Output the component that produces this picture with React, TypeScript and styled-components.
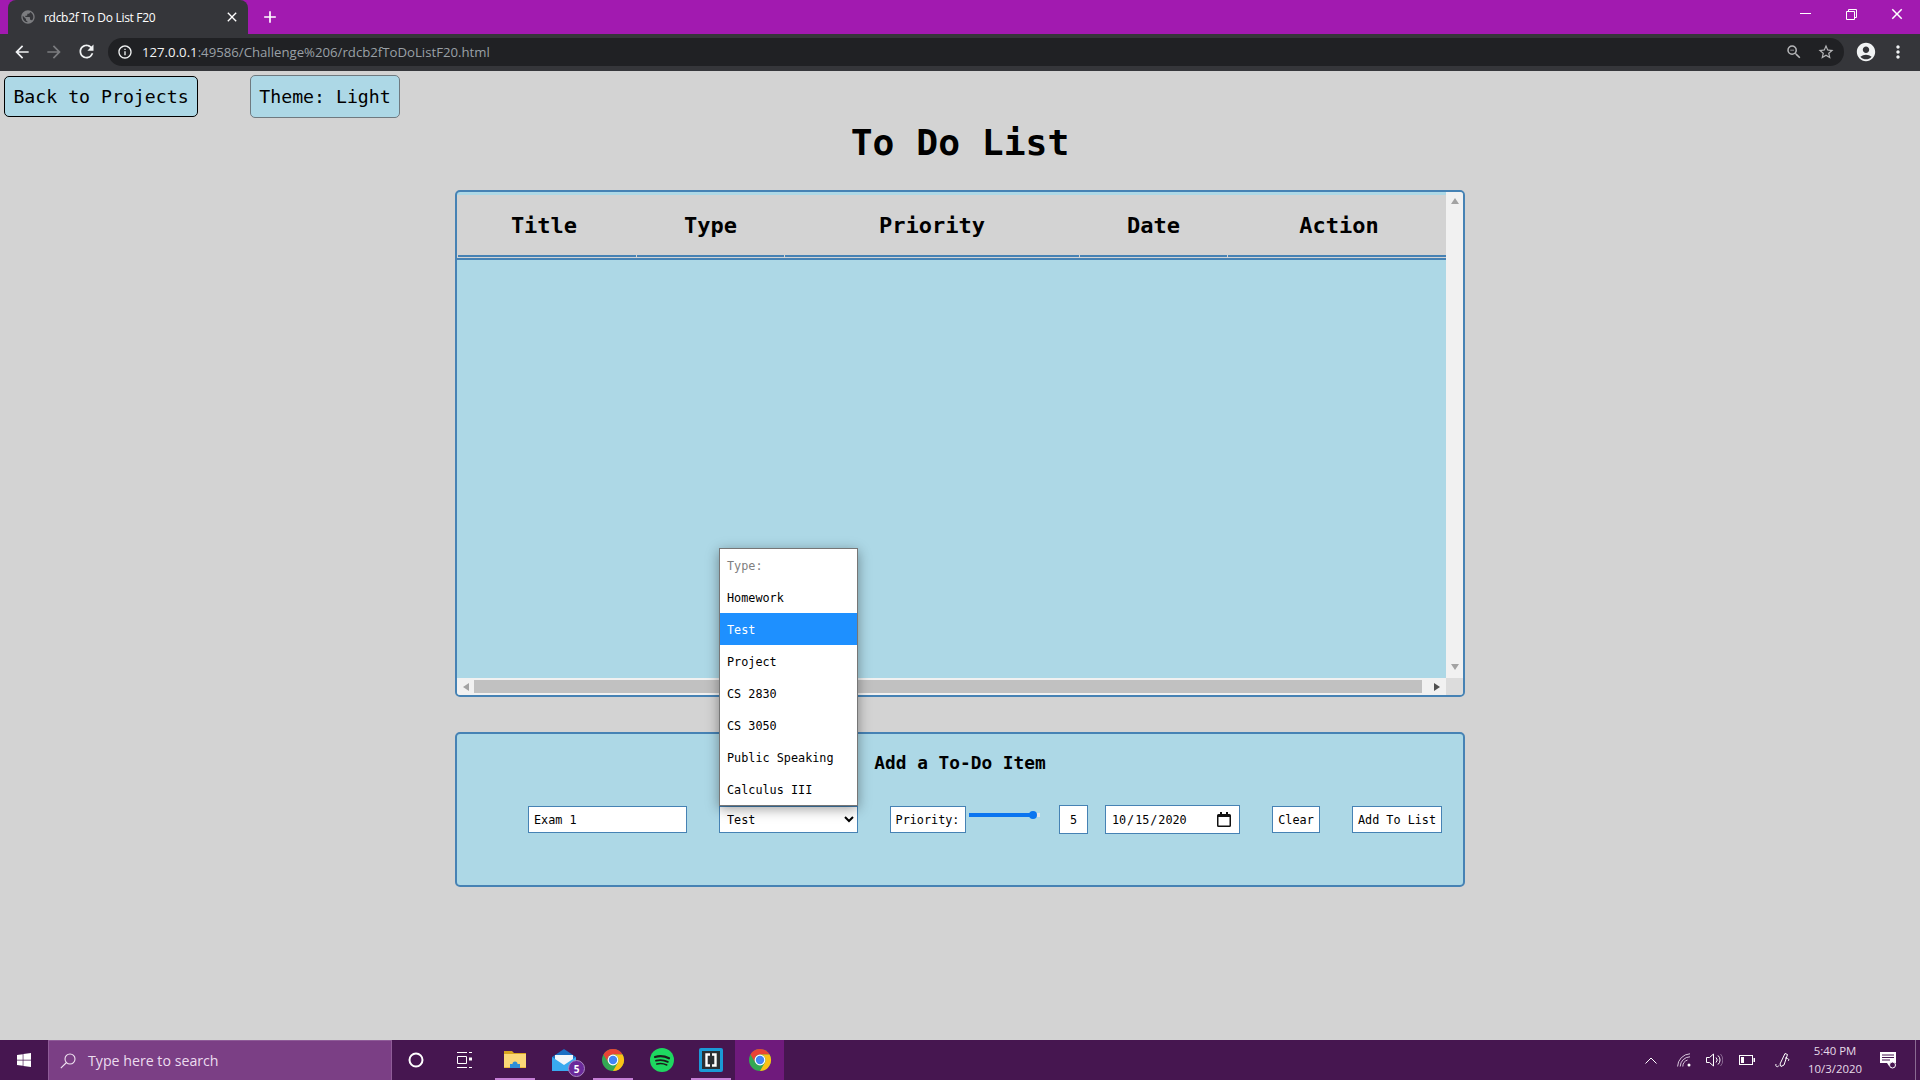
import React from 'react';
import styled, {createGlobalStyle} from 'styled-components';
import {MdArrowBack, MdArrowForward, MdRefresh, MdInfoOutline, MdAccountCircle, MdMoreVert, MdStarBorder, MdOutlineZoomOut, MdPublic, MdClose, MdAdd} from 'react-icons/md';
import {FaWindows} from 'react-icons/fa';

const MONO = '"DejaVu Sans Mono", "Liberation Mono", monospace';
const UI = '"Open Sans", "Noto Sans", sans-serif';

const calendarIcon = encodeURIComponent(
  '<svg xmlns="http://www.w3.org/2000/svg" width="14" height="15"><path d="M3 0h2v2h4V0h2v2h1.500A1.500 1.500 0 0 1 14 3.500v10a1.500 1.500 0 0 1-1.500 1.500h-11A1.500 1.500 0 0 1 0 13.500v-10A1.500 1.500 0 0 1 1.500 2H3z" fill="#111"/><rect x="1.500" y="5" width="11" height="8.500" fill="#fff"/></svg>'
);

const GlobalStyle = createGlobalStyle`
  html, body { margin: 0; padding: 0; height: 100%; overflow: hidden; }
  #root { height: 100%; }
  * { box-sizing: border-box; }
`;

const Screen = styled.div`
  width: 1920px;
  height: 1080px;
  display: flex;
  flex-direction: column;
  background: #d3d3d3;
  font-family: ${MONO};
  color: #000;
`;

/* browser chrome */
const TabStrip = styled.div`
  height: 34px;
  background: #a21ab0;
  display: flex;
  align-items: flex-end;
  padding-left: 8px;
  color: #fff;
  font-family: ${UI};
`;
const Tab = styled.div`
  width: 240px;
  height: 34px;
  background: #35363a;
  border-radius: 8px 8px 0 0;
  display: flex;
  align-items: center;
  padding: 0 8px 0 12px;
  font-size: 12px;
  letter-spacing: -0.3px;
`;
const TabTitle = styled.span`
  flex: 1;
  margin-left: 8px;
`;
const NewTab = styled.div`
  width: 44px;
  height: 34px;
  display: flex;
  align-items: center;
  justify-content: center;
`;
const WindowControls = styled.div`
  margin-left: auto;
  height: 28px;
  align-self: flex-start;
  display: flex;
`;
const WindowButton = styled.div`
  width: 46px;
  display: flex;
  align-items: center;
  justify-content: center;
`;
const Toolbar = styled.div`
  height: 37px;
  background: #35363a;
  display: flex;
  align-items: center;
  padding: 0 0 2px 6px;
`;
const NavButton = styled.div<{$dim?: boolean}>`
  width: 32px;
  height: 32px;
  display: flex;
  align-items: center;
  justify-content: center;
  color: ${p => (p.$dim ? '#7b7c7f' : '#f1f3f4')};
`;
const Omnibox = styled.div`
  width: 1736px;
  height: 28px;
  margin-left: 6px;
  background: #202124;
  border-radius: 14px;
  display: flex;
  align-items: center;
  padding: 0 2px 0 9px;
  color: #f1f3f4;
  font-family: ${UI};
  font-size: 13.2px;
`;
const Url = styled.span`
  margin-left: 9px;
  flex: 1;
`;
const UrlDim = styled.span`
  color: #9aa0a6;
`;
const OmniIcon = styled.div`
  width: 32px;
  display: flex;
  justify-content: center;
  color: #b5b6b8;
`;
const ToolbarEnd = styled.div`
  flex: 1;
  display: flex;
  align-items: center;
  justify-content: flex-end;
  color: #f1f3f4;
  padding-right: 6px;
`;
const ToolbarSlot = styled.div`
  width: 32px;
  display: flex;
  justify-content: center;
`;

/* page */
const Page = styled.main`
  flex: 1;
  min-height: 0;
  display: flex;
  flex-direction: column;
`;
const TopButtons = styled.div`
  height: 48px;
  padding: 3px 0 0 4px;
  display: flex;
  align-items: center;
`;
const NavAction = styled.button<{$outline?: string}>`
  height: ${p => (p.$outline ? '43px' : '41px')};
  width: ${p => (p.$outline ? '150px' : '194px')};
  margin-left: ${p => (p.$outline ? '52px' : '0')};
  padding: 0;
  background: #add8e6;
  border: 1px solid ${p => p.$outline || '#000'};
  border-radius: 5px;
  font-family: ${MONO};
  font-size: 18.2px;
  color: #000;
`;
const Heading = styled.h1`
  margin: 0;
  height: 71px;
  line-height: 48px;
  text-align: center;
  font-size: 36.3px;
  font-weight: 700;
`;
const Panel = styled.section`
  width: 1010px;
  margin: 0 auto;
  border: 2px solid #4682b4;
  border-radius: 5px;
  background: #add8e6;
`;
const ListPanel = styled(Panel)`
  height: 507px;
  display: grid;
  grid-template-columns: 1fr 17px;
  grid-template-rows: 1fr 17px;
  overflow: hidden;
`;
const ListBody = styled.div`
  padding-top: 3px;
`;
const HeaderRow = styled.div`
  display: grid;
  grid-template-columns: 178px 147px 294px 147px 1fr;
  column-gap: 1px;
  padding: 0 0 1px 1px;
  background: #d3d3d3;
  border-bottom: 2px solid #4682b4;
`;
const HeaderCell = styled.div`
  height: 62px;
  border-bottom: 2px solid #4682b4;
  display: flex;
  align-items: center;
  justify-content: center;
  font-size: 22px;
  font-weight: 700;
  &:first-child { padding-right: 6px; }
  &:last-child { padding-left: 4px; }
`;
const VScroll = styled.div`
  background: #f1f1f1;
  display: flex;
  flex-direction: column;
  justify-content: space-between;
  align-items: center;
  padding: 6px 0 8px;
`;
const HScroll = styled.div`
  background: #f1f1f1;
  display: grid;
  grid-template-columns: 17px 1fr 24px;
  align-items: start;
  padding-top: 2px;
`;
const HThumb = styled.div`
  height: 13px;
  background: #c1c1c1;
`;
const ScrollCorner = styled.div`
  background: #dcdcdc;
`;
const ArrowCell = styled.div<{$nudge?: number}>`
  height: 13px;
  display: flex;
  justify-content: center;
  align-items: center;
  padding-left: ${p => p.$nudge || 0}px;
`;
const FormPanel = styled(Panel)`
  height: 155px;
  margin-top: 35px;
`;
const FormTitle = styled.h2`
  margin: 0;
  height: 71px;
  padding-top: 15px;
  line-height: 27px;
  text-align: center;
  font-size: 17.8px;
  font-weight: 700;
`;
const FormRow = styled.div`
  display: flex;
  align-items: center;
  height: 29px;
  padding-left: 71px;
  font-size: 11.8px;
`;
const boxStyle = `
  height: 27px;
  background: #fff;
  border: 1px solid #4682b4;
  border-radius: 0;
  font-family: ${MONO};
  font-size: 11.8px;
  color: #000;
  outline: none;
`;
const TextInput = styled.input`
  ${boxStyle}
  width: 159px;
  padding: 0 5px;
`;
const SelectWrap = styled.div`
  position: relative;
  width: 139px;
  margin-left: 32px;
`;
const TypeSelect = styled.select`
  ${boxStyle}
  width: 100%;
  display: block;
  padding-left: 3px;
`;
const OptionList = styled.ul`
  position: absolute;
  left: 0;
  right: 0;
  bottom: 100%;
  margin: 0;
  padding: 0;
  list-style: none;
  background: #fff;
  border: 1px solid #767676;
  box-shadow: 0 3px 12px rgba(0, 0, 0, 0.38);
  z-index: 5;
`;
const OptionItem = styled.li<{$selected?: boolean; $muted?: boolean}>`
  height: 32px;
  line-height: 34px;
  padding-left: 7px;
  white-space: pre;
  color: ${p => (p.$selected ? '#fff' : p.$muted ? '#808080' : '#000')};
  background: ${p => (p.$selected ? '#1e90ff' : 'transparent')};
`;
const PriorityLabel = styled.label`
  ${boxStyle}
  width: 76px;
  margin-left: 32px;
  padding-right: 1px;
  display: flex;
  align-items: center;
  justify-content: center;
`;
const Slider = styled.input`
  appearance: none;
  width: 71px;
  height: 8px;
  margin: 0 0 10px 3px;
  padding: 0;
  background: linear-gradient(90deg, #0b75f0 0 90%, #e4e4e4 90% 100%);
  background-size: 100% 4px;
  background-position: center;
  background-repeat: no-repeat;
  border-radius: 2px;
  &::-webkit-slider-thumb {
    appearance: none;
    width: 8px;
    height: 8px;
    border-radius: 50%;
    background: #0b75f0;
  }
`;
const ValueBox = styled.div`
  ${boxStyle}
  width: 29px;
  height: 29px;
  margin-left: 19px;
  display: flex;
  align-items: center;
  justify-content: center;
`;
const DateInput = styled.input`
  ${boxStyle}
  width: 135px;
  height: 29px;
  margin-left: 17px;
  padding: 0 8px 0 5px;
  letter-spacing: -0.05px;
  &::-webkit-calendar-picker-indicator {
    width: 14px;
    height: 15px;
    padding: 0;
    margin: 0;
    background: url("data:image/svg+xml,${calendarIcon}") no-repeat center;
  }
`;
const FormButton = styled.button<{$width: number; $gap: number}>`
  ${boxStyle}
  width: ${p => p.$width}px;
  margin-left: ${p => p.$gap}px;
  padding: 0;
`;

/* windows taskbar */
const Taskbar = styled.footer`
  height: 40px;
  background: #461650;
  display: flex;
  color: #fff;
  font-family: ${UI};
`;
const StartButton = styled.div`
  width: 48px;
  display: flex;
  align-items: center;
  justify-content: center;
`;
const SearchBox = styled.div`
  width: 344px;
  background: #7b3f85;
  border: 1px solid #8f5c98;
  border-bottom: 0;
  display: flex;
  align-items: center;
  padding-left: 11px;
  font-size: 14.2px;
  color: #ecdcef;
`;
const SearchText = styled.span`
  margin-left: 12px;
`;
const TaskSlot = styled.div<{$active?: boolean; $width?: number; $mark?: number}>`
  position: relative;
  width: ${p => p.$width || 49}px;
  display: flex;
  align-items: center;
  justify-content: center;
  background: ${p => (p.$active ? '#6f1a7c' : 'transparent')};
  &::after {
    content: '';
    display: ${p => (p.$mark ? 'block' : 'none')};
    position: absolute;
    bottom: 0;
    left: 50%;
    width: ${p => p.$mark}px;
    height: 2px;
    transform: translateX(-50%);
    background: #c57fd6;
  }
`;
const TaskGap = styled.div`
  width: 2px;
`;
const Badge = styled.span`
  position: absolute;
  right: 3px;
  bottom: 3px;
  width: 17px;
  height: 17px;
  border-radius: 50%;
  background: #6b2a9b;
  border: 1px solid #a988c0;
  display: flex;
  align-items: center;
  justify-content: center;
  font-size: 10px;
  font-weight: 700;
`;
const Tray = styled.div`
  margin-left: auto;
  display: flex;
  align-items: center;
  height: 100%;
`;
const TraySlot = styled.div<{$width: number}>`
  width: ${p => p.$width}px;
  display: flex;
  justify-content: center;
`;
const Clock = styled.div`
  width: 52px;
  display: flex;
  flex-direction: column;
  align-items: center;
  white-space: nowrap;
  font-size: 11.4px;
  line-height: 18px;
  color: #e6dbe8;
`;
const ShowDesktop = styled.div`
  width: 5px;
  height: 100%;
  border-left: 1px solid #8a6a92;
`;

const ChromeLogo = () => (
  <svg width="24" height="24" viewBox="0 0 24 24">
    <circle cx="12" cy="12" r="11" fill="#34a853" />
    <path d="M12 1A11 11 0 0 1 21.53 6.5H12A5.5 5.5 0 0 0 7.24 14.75L2.47 6.5A11 11 0 0 1 12 1Z" fill="#ea4335" />
    <path d="M21.53 6.5A11 11 0 0 1 12 23L16.76 14.75A5.5 5.5 0 0 0 12 6.5Z" fill="#fbc116" />
    <circle cx="12" cy="12" r="5.4" fill="#fff" />
    <circle cx="12" cy="12" r="4.2" fill="#4285f4" />
  </svg>
);

const SpotifyLogo = () => (
  <svg width="24" height="24" viewBox="0 0 24 24">
    <circle cx="12" cy="12" r="12" fill="#1ed760" />
    <g fill="none" stroke="#1b1b1b" strokeLinecap="round">
      <path d="M5 9c4.500-1.300 9.500-1 14 1.300" strokeWidth="2.200" />
      <path d="M6 12.700c4-1.100 8-.7 11.800 1.200" strokeWidth="1.800" />
      <path d="M6.800 16c3.500-.8 6.800-.5 10 1" strokeWidth="1.500" />
    </g>
  </svg>
);

const BracketsLogo = () => (
  <svg width="24" height="24" viewBox="0 0 24 24">
    <rect width="24" height="24" rx="2" fill="#1b9ad6" />
    <rect x="3" y="3" width="18" height="18" fill="#2b2f33" />
    <path d="M11 6.500H7.500v11H11M13 6.500h3.500v11H13" fill="none" stroke="#fff" strokeWidth="2.400" />
  </svg>
);

const FolderLogo = () => (
  <svg width="22" height="20" viewBox="0 0 22 20">
    <path d="M0 1h8l2 2h12v3H0z" fill="#d9a520" />
    <path d="M0 4h22v13H0z" fill="#fbd777" />
    <path d="M6 18v-4h2.500a2.500 2.500 0 0 1 5 0H16v4z" fill="#2f8fd8" />
    <path d="M0 17h6v1H0zM16 17h6v1h-6z" fill="#eeb93c" />
  </svg>
);

const MailLogo = () => (
  <svg width="24" height="24" viewBox="0 0 24 24">
    <path d="M0 9 12 1l12 8v14H0z" fill="#1a6fc4" />
    <path d="M3 7h18v9l-9 5-9-5z" fill="#f2f6fa" />
    <path d="M0 9l12 8 12-8v14H0z" fill="#39aaf0" />
  </svg>
);

const TaskViewIcon = () => (
  <svg width="16" height="16" viewBox="0 0 16 16" fill="none" stroke="#fff">
    <path d="M1 .5h10M1 15.500h10M1.500 4.500h9v7h-9z" />
    <path d="M13 .5h3M13 15.500h3" />
    <rect x="13" y="5.500" width="3" height="3" fill="#fff" stroke="none" />
  </svg>
);

const SearchGlass = () => (
  <svg width="16" height="16" viewBox="0 0 16 16" fill="none" stroke="#f0e4f2" strokeWidth="1.100">
    <circle cx="10" cy="6" r="5" />
    <path d="M6.500 9.500.8 15.200" />
  </svg>
);

const WifiIcon = () => (
  <svg width="14" height="14" viewBox="0 0 14 14" fill="none" stroke="#d9c9dd">
    <path d="M.6 13.500A13 13 0 0 1 13 .8M3.200 13.500A10 10 0 0 1 13 3.800M5.800 13.500A7 7 0 0 1 10.500 7" />
    <circle cx="12" cy="12" r="1.500" fill="#fff" stroke="none" />
  </svg>
);

const SpeakerIcon = () => (
  <svg width="17" height="14" viewBox="0 0 17 14" fill="none" stroke="#fff">
    <path d="M.5 4.500h3L7.500 1v12l-4-3.500h-3z" />
    <path d="M10 4.500a3.500 3.500 0 0 1 0 5M12 2.500a6 6 0 0 1 0 9" />
    <path d="M14.500 1a9 9 0 0 1 0 12" stroke="#8a6a92" />
  </svg>
);

const BatteryIcon = () => (
  <svg width="16" height="10" viewBox="0 0 16 10" fill="none" stroke="#fff">
    <rect x=".5" y=".5" width="13" height="9" />
    <rect x="2" y="2" width="3" height="6" fill="#fff" stroke="none" />
    <rect x="14.500" y="3" width="1.500" height="4" fill="#fff" stroke="none" />
  </svg>
);

const PenIcon = () => (
  <svg width="16" height="16" viewBox="0 0 16 16" fill="none" stroke="#fff">
    <path d="M5 12 10 1.500l2.500 1L9 13l-3 1.500z" />
    <path d="M1 12c-1 3 2 3.500 3 1.500M10 6c3 0 5 1.500 3 3" />
  </svg>
);

const ChatIcon = () => (
  <svg width="18" height="18" viewBox="0 0 18 18">
    <path d="M1 1h16v11h-5l-2 3-2-3H1z" fill="#fff" />
    <path d="M3 4h12M3 6.500h12M3 9h8" stroke="#461650" />
    <circle cx="13.500" cy="14" r="3" fill="#461650" stroke="#fff" />
  </svg>
);

const RestoreIcon = () => (
  <svg width="11" height="11" viewBox="0 0 11 11" fill="none" stroke="#fff">
    <path d="M.5 2.500h8v8h-8zM2.500 2.500v-2h8v8h-2" />
  </svg>
);

const ScrollArrow = ({dir}: {dir: 'up' | 'down' | 'left' | 'right'}) => {
  const dark = dir === 'right' ? '#505050' : '#a3a3a3';
  const points = {up: '0,6 4,0 8,6', down: '0,0 8,0 4,6', left: '6,0 6,8 0,4', right: '0,0 6,4 0,8'}[dir];
  const vertical = dir === 'up' || dir === 'down';
  return (
    <svg width={vertical ? 8 : 6} height={vertical ? 6 : 8}>
      <polygon points={points} fill={dark} />
    </svg>
  );
};

const columns = ['Title', 'Type', 'Priority', 'Date', 'Action'];
const typeOptions = ['Homework', 'Test', 'Project', 'CS 2830', 'CS 3050', 'Public Speaking', 'Calculus III'];

const App = () => {
  return (
    <Screen>
      <GlobalStyle />
      <TabStrip>
        <Tab>
          <MdPublic size={16} color="#7c7d80" />
          <TabTitle>rdcb2f To Do List F20</TabTitle>
          <MdClose size={16} />
        </Tab>
        <NewTab>
          <MdAdd size={20} />
        </NewTab>
        <WindowControls>
          <WindowButton>
            <svg width="11" height="2"><rect width="11" height="1" fill="#fff" /></svg>
          </WindowButton>
          <WindowButton>
            <RestoreIcon />
          </WindowButton>
          <WindowButton>
            <MdClose size={18} />
          </WindowButton>
        </WindowControls>
      </TabStrip>
      <Toolbar>
        <NavButton><MdArrowBack size={20} /></NavButton>
        <NavButton $dim><MdArrowForward size={20} /></NavButton>
        <NavButton><MdRefresh size={21} /></NavButton>
        <Omnibox>
          <MdInfoOutline size={16} />
          <Url>127.0.0.1<UrlDim>:49586/Challenge%206/rdcb2fToDoListF20.html</UrlDim></Url>
          <OmniIcon><MdOutlineZoomOut size={18} /></OmniIcon>
          <OmniIcon><MdStarBorder size={18} /></OmniIcon>
        </Omnibox>
        <ToolbarEnd>
          <ToolbarSlot><MdAccountCircle size={22} /></ToolbarSlot>
          <ToolbarSlot><MdMoreVert size={20} /></ToolbarSlot>
        </ToolbarEnd>
      </Toolbar>

      <Page>
        <TopButtons>
          <NavAction>Back to Projects</NavAction>
          <NavAction $outline="#6f7a80">Theme: Light</NavAction>
        </TopButtons>
        <Heading>To Do List</Heading>

        <ListPanel>
          <ListBody>
            <HeaderRow>
              {columns.map(c => <HeaderCell key={c}>{c}</HeaderCell>)}
            </HeaderRow>
          </ListBody>
          <VScroll>
            <ScrollArrow dir="up" />
            <ScrollArrow dir="down" />
          </VScroll>
          <HScroll>
            <ArrowCell><ScrollArrow dir="left" /></ArrowCell>
            <HThumb />
            <ArrowCell $nudge={6}><ScrollArrow dir="right" /></ArrowCell>
          </HScroll>
          <ScrollCorner />
        </ListPanel>

        <FormPanel>
          <FormTitle>Add a To-Do Item</FormTitle>
          <FormRow>
            <TextInput defaultValue="Exam 1" />
            <SelectWrap>
              <TypeSelect defaultValue="Test">
                {typeOptions.map(o => <option key={o}>{o}</option>)}
              </TypeSelect>
              <OptionList>
                <OptionItem $muted>Type:</OptionItem>
                {typeOptions.map(o => (
                  <OptionItem key={o} $selected={o === 'Test'}>{o}</OptionItem>
                ))}
              </OptionList>
            </SelectWrap>
            <PriorityLabel>Priority:</PriorityLabel>
            <Slider type="range" min={0} max={100} defaultValue={95} />
            <ValueBox>5</ValueBox>
            <DateInput type="date" defaultValue="2020-10-15" />
            <FormButton $width={48} $gap={32}>Clear</FormButton>
            <FormButton $width={90} $gap={32}>Add To List</FormButton>
          </FormRow>
        </FormPanel>
      </Page>

      <Taskbar>
        <StartButton><FaWindows size={16} /></StartButton>
        <SearchBox>
          <SearchGlass />
          <SearchText>Type here to search</SearchText>
        </SearchBox>
        <TaskSlot $width={48}>
          <svg width="16" height="16"><circle cx="8" cy="8" r="6.500" fill="none" stroke="#fff" strokeWidth="2" /></svg>
        </TaskSlot>
        <TaskSlot $width={48}><TaskViewIcon /></TaskSlot>
        <TaskGap />
        <TaskSlot $mark={40}><FolderLogo /></TaskSlot>
        <TaskSlot><MailLogo /><Badge>5</Badge></TaskSlot>
        <TaskSlot $mark={40}><ChromeLogo /></TaskSlot>
        <TaskSlot><SpotifyLogo /></TaskSlot>
        <TaskSlot $mark={40}><BracketsLogo /></TaskSlot>
        <TaskSlot $active><ChromeLogo /></TaskSlot>
        <Tray>
          <TraySlot $width={52}>
            <svg width="12" height="7" fill="none" stroke="#fff"><path d="M.5 6.500 6 1l5.500 5.500" /></svg>
          </TraySlot>
          <TraySlot $width={14}><WifiIcon /></TraySlot>
          <TraySlot $width={46}><SpeakerIcon /></TraySlot>
          <TraySlot $width={20}><BatteryIcon /></TraySlot>
          <TraySlot $width={52}><PenIcon /></TraySlot>
          <Clock><span>5:40 PM</span><span>10/3/2020</span></Clock>
          <TraySlot $width={54}><ChatIcon /></TraySlot>
          <ShowDesktop />
        </Tray>
      </Taskbar>
    </Screen>
  );
};

export default App;
